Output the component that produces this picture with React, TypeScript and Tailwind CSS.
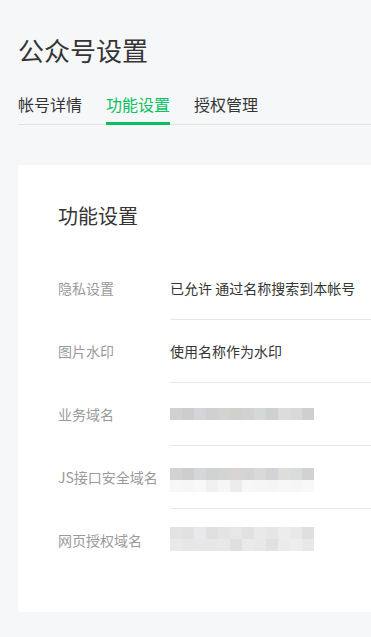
import React from "react";

const row4a = ["#d2d2d2","#cecdd0","#d6d7d9","#d1d2d3","#d3d4d4","#d8d4d1","#d3d4d4","#d8dada","#d3d2d5","#dddddc","#dadbdb","#d1d2d3"];
const row4b = ["#f7f7f7","#f6f6f5","#f8f8f8","#f0f0f0","#f6f6f6","#ececec","#f7f7f7","#f6f6f6","#f5f5f4","#f7f7f7","#f6f6f6","#f8f8f8"];
const row3 = ["#d1d1d1","#cccdce","#d4d5d8","#cfd0d2","#d2d3d3","#d3cfcc","#d1d2d3","#d5d8d8","#d0cfd2","#dcdcdb","#d8d9d9","#cfcfd1"];
const row5a = ["#e3e3e3","#e1e1e1","#e9e9eb","#e0e0e0","#e3e4e4","#e8e7e7","#e1e1e1","#e8e9e9","#e6e6e6","#ececed","#e9e9e9","#dfdfdf"];
const row5b = ["#e9e9e9","#e8e7e6","#e6e7e9","#e7e7e7","#e8e8e8","#dfdfde","#e9eaeb","#e8e8e9","#e1e1e2","#ebebeb","#ededed","#e8e8e8"];

function Cells({ colors }: { colors: string[] }) {
  return (
    <div className="flex h-[12px]">
      {colors.map((c, i) => (
        <div key={i} className="w-[12px] h-[12px]" style={{ backgroundColor: c }} />
      ))}
    </div>
  );
}

function Row({
  label,
  children,
  last,
}: {
  label: string;
  children: React.ReactNode;
  last?: boolean;
}) {
  return (
    <div className="flex">
      <div className="w-[112px] shrink-0 pt-[20px] text-[14px] leading-[22px] text-[#9a9a9a] whitespace-nowrap">
        {label}
      </div>
      <div
        className={
          "flex-1 pt-[20px] pb-[20px] text-[14px] leading-[22px] text-[#353535] " +
          (last ? "border-b border-transparent" : "border-b border-[#e7e7e7]")
        }
      >
        <div className="h-[22px]">{children}</div>
      </div>
    </div>
  );
}

export default function App() {
  return (
    <div
      className="w-full min-h-[637px] h-[637px] overflow-hidden bg-[#f6f7f9]"
      style={{ fontFamily: '"Noto Sans CJK SC", "Noto Sans", sans-serif' }}
    >
      <div className="pl-[18px]">
        <h1 className="pt-[32px] text-[26px] leading-[36px] text-[#353535] font-normal">
          公众号设置
        </h1>
        <div className="mt-[24px] flex gap-[24px] border-b border-[#e2e2e2] text-[16px] leading-[24px] text-[#353535]">
          <div className="pb-[7px] -mb-px">帐号详情</div>
          <div className="pb-[6px] -mb-px border-b-[3px] border-[#07c160] text-[#07c160]">
            功能设置
          </div>
          <div className="pb-[7px] -mb-px">授权管理</div>
        </div>
        <div className="mt-[40px] -mr-[60px] bg-white rounded-[3px] pl-[40px] pt-[37px] pb-[42px]">
          <div className="text-[20px] leading-[28px] text-[#353535]">功能设置</div>
          <div className="mt-[27px]">
            <Row label="隐私设置">已允许 通过名称搜索到本帐号</Row>
            <Row label="图片水印">使用名称作为水印</Row>
            <Row label="业务域名">
              <div className="pt-[5px]">
                <Cells colors={row3} />
              </div>
            </Row>
            <Row label="JS接口安全域名">
              <div className="pt-[2px]">
                <Cells colors={row4a} />
                <Cells colors={row4b} />
              </div>
            </Row>
            <Row label="网页授权域名" last>
              <div className="-mt-[2px]">
                <Cells colors={row5a} />
                <Cells colors={row5b} />
              </div>
            </Row>
          </div>
        </div>
      </div>
    </div>
  );
}
